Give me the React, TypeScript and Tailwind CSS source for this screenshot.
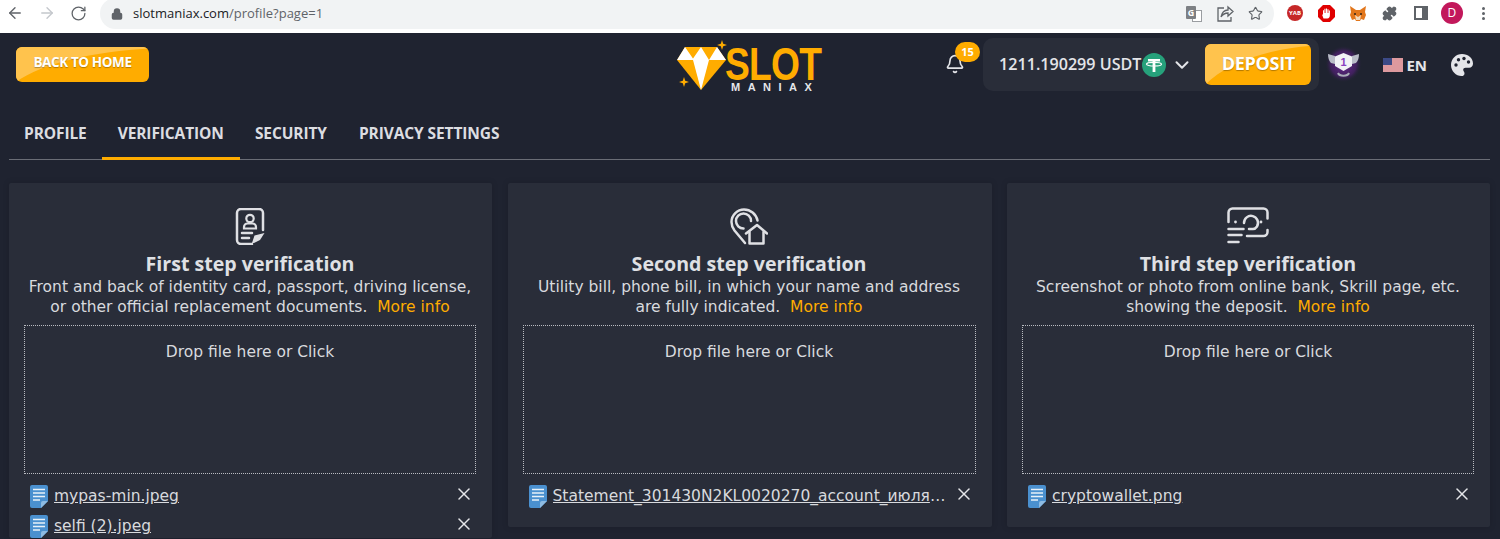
import { ArrowLeft, ArrowRight, RotateCw, Lock, Star, Puzzle, ChevronDown, Bell, X } from "lucide-react";

const font = { fontFamily: '"DejaVu Sans", sans-serif' };
const open = { fontFamily: '"Open Sans", sans-serif' };

function Gloss() {
  return (
    <svg className="absolute inset-0 h-full w-full" viewBox="0 0 100 100" preserveAspectRatio="none" aria-hidden="true">
      <path d="M0 0H100V4C60 12 20 45 0 100Z" fill="#ffc34d" />
    </svg>
  );
}

function IdIcon() {
  return (
    <svg width="30" height="37" viewBox="0 0 30 37" fill="none" stroke="#dfe0e4" strokeWidth="2.500" strokeLinecap="round" aria-hidden="true">
      <path d="M28 22V5a4 4 0 0 0-4-4H6a4 4 0 0 0-4 4v27a4 4 0 0 0 4 4h11" />
      <circle cx="15" cy="10.500" r="3.700" strokeWidth="2.200" />
      <path d="M9 20.500v-1.500a3.500 3.500 0 0 1 3.500-3.500h5a3.500 3.500 0 0 1 3.500 3.500v1.500Z" strokeWidth="2.200" />
      <path d="M7 25h10M7 30h7" />
      <path d="M17 35l2.500-7.500 10-2.500-4.500 7-6 3Z" fill="#dfe0e4" stroke="none" />
    </svg>
  );
}

function PinIcon() {
  return (
    <svg width="38" height="37" viewBox="0 0 38 37" fill="none" stroke="#dfe0e4" strokeWidth="2.500" strokeLinecap="round" strokeLinejoin="round" aria-hidden="true">
      <path d="M15 35 4.500 22.500A14 14 0 0 1 1.500 14C1.500 7 7.500 1.500 14 1.500c6.500 0 12 4.500 13.500 11" />
      <path d="M21 13a7.500 7.500 0 1 0-7.500 7.500" />
      <path d="M16 25.500 27 17l10 8.500" />
      <path d="M19.500 24v11.500h14V24" />
    </svg>
  );
}

function CashIcon() {
  return (
    <svg width="42" height="38" viewBox="0 0 42 38" fill="none" stroke="#dfe0e4" strokeWidth="2.500" strokeLinecap="round" aria-hidden="true">
      <path d="M1.500 15V5.500a4 4 0 0 1 4-4h31a4 4 0 0 1 4 4v6M40.500 23v2a4 4 0 0 1-4 4H20" />
      <path d="M17 16a7 7 0 1 1 13 3.500c-1 1.500-2 2.500-4 2.500h-4" />
      <circle cx="8.500" cy="15" r="1.400" fill="#dfe0e4" stroke="none" />
      <circle cx="34" cy="15" r="1.400" fill="#dfe0e4" stroke="none" />
      <path d="M1.500 22h15M1.500 28h13M1.500 35h10" />
    </svg>
  );
}

function FileIcon() {
  return (
    <svg width="18" height="23" viewBox="0 0 18 23" aria-hidden="true" className="shrink-0">
      <path d="M2 0h14a2 2 0 0 1 2 2v14l-7 7H2a2 2 0 0 1-2-2V2a2 2 0 0 1 2-2Z" fill="#4a90cf" />
      <path d="M18 16h-5a2 2 0 0 0-2 2v5Z" fill="#8ebbe2" />
      <path d="M3 4.500h12M3 8h12M3 11.500h12M3 15h7" stroke="#e8f1f9" strokeWidth="1.300" />
    </svg>
  );
}

function Tether() {
  return (
    <svg width="24" height="24" viewBox="0 0 24 24" aria-hidden="true" className="ml-[1px] shrink-0">
      <circle cx="12" cy="12" r="12" fill="#26a17b" />
      <path d="M6 6h12v2.600h-4.600V19h-2.800V8.600H6Z" fill="#fff" />
      <ellipse cx="12" cy="11.200" rx="7.500" ry="1.800" fill="none" stroke="#fff" strokeWidth="1.200" />
    </svg>
  );
}

function Trophy() {
  return (
    <svg width="37" height="38" viewBox="0 0 37 38" aria-hidden="true">
      <defs>
        <radialGradient id="glow">
          <stop offset="0%" stopColor="#7a2aa8" stopOpacity="0.9" />
          <stop offset="70%" stopColor="#5a1f80" stopOpacity="0.55" />
          <stop offset="100%" stopColor="#1f2330" stopOpacity="0" />
        </radialGradient>
      </defs>
      <circle cx="18.500" cy="19" r="18.500" fill="url(#glow)" />
      <path d="M3 9l7 2v8l-4-1C4 16 3 13 3 9ZM34 9l-7 2v8l4-1c2-2 3-5 3-9Z" fill="#b9bcc8" />
      <path d="M18.500 8l8.500 3.500V21l-8.500 5L10 21v-9.500Z" fill="#f1f2f6" />
      <text x="18.500" y="21" textAnchor="middle" fontSize="11" fontWeight="700" fill="#8a3fc0" fontFamily="Liberation Sans">1</text>
      <path d="M13 28c1.500 3.500 9.500 3.500 11 0" stroke="#a9acb8" strokeWidth="2" fill="none" />
    </svg>
  );
}

function Flag() {
  return (
    <svg width="20" height="14" viewBox="0 0 20 14" aria-hidden="true" className="shrink-0">
      <rect width="20" height="14" fill="#f2f2f2" />
      <path d="M0 1h20M0 3h20M0 5h20M0 7h20M0 9h20M0 11h20M0 13h20" stroke="#c8414b" strokeWidth="1" />
      <rect width="9" height="7" fill="#3c4a86" />
    </svg>
  );
}

function PaletteIcon() {
  return (
    <svg width="22" height="22" viewBox="0 0 22 22" aria-hidden="true" className="ml-[24px] mt-[21px] shrink-0">
      <path d="M11 0C5 0 0 4.800 0 11s5 11 10.500 11c2 0 3-1.200 3-2.600 0-1.800-1.300-2.200-1.300-3.600 0-1.200 1-2 2.300-2H18c2.500 0 4-1.800 4-4.300C22 4 17 0 11 0Z" fill="#e4e5e9" />
      <circle cx="5" cy="11" r="1.700" fill="#1f2330" />
      <circle cx="7.500" cy="5.800" r="1.700" fill="#1f2330" />
      <circle cx="13" cy="4.500" r="1.700" fill="#1f2330" />
      <circle cx="17.500" cy="8" r="1.700" fill="#1f2330" />
    </svg>
  );
}

function Logo() {
  return (
    <div className="ml-[9px] flex h-[58px] w-[146px] items-start" aria-label="Slot Maniax">
      <svg width="50" height="56" viewBox="0 0 50 56" className="shrink-0 overflow-visible" aria-hidden="true">
        <path d="M1 20 9 7h32l9 13-25 30Z" fill="#ffac00" />
        <path d="M1 20 9 7l9 13ZM16 20l9-13 8 13ZM33 20l8-13 9 13Z" fill="#fff" />
        <path d="M17 20h16l-8 30Z" fill="#fff" />
        <path d="M46 0l1.200 3.800 3.800 1.200-3.800 1.200L46 10l-1.200-3.800L41 5l3.800-1.200ZM8 37l1.200 3.800 3.800 1.200-3.800 1.200L8 47l-1.200-3.800L3 42l3.800-1.200Z" fill="#ffac00" />
      </svg>
      <div className="-ml-[1px] flex w-[97px] flex-col" style={{ fontFamily: '"Liberation Sans", sans-serif' }}>
        <span className="mt-[8px] h-[33px] origin-left scale-x-[0.81] whitespace-nowrap text-[46px] font-bold leading-[33px] tracking-[-1px] text-[#ffac00]">SLOT</span>
        <span className="mt-[1px] pl-[6px] text-[11px] font-bold leading-[10px] tracking-[7.500px] whitespace-nowrap text-[#e5e6ea]">MANIAX</span>
      </div>
    </div>
  );
}

function Chrome() {
  const box = "flex w-[18px] shrink-0 items-center justify-center";
  return (
    <div className="flex h-[33px] items-start overflow-hidden bg-white" style={open}>
      <div className="flex h-[26px] w-[100px] items-center gap-[14px] pl-[6px] text-[#5f6368]">
        <ArrowLeft size={18} strokeWidth={1.800} />
        <ArrowRight size={18} strokeWidth={1.800} className="text-[#c4c7cc]" />
        <RotateCw size={17} strokeWidth={1.800} />
      </div>
      <div className="-mt-[2px] flex h-[31px] w-[1174px] items-center rounded-full bg-[#f1f3f4] pl-[11px] pr-[10px]">
        <Lock size={12} strokeWidth={3} className="text-[#5f6368]" fill="#5f6368" />
        <span className="ml-[10px] text-[13px] text-[#202124]">slotmaniax.com<span className="text-[#5f6368]">/profile?page=1</span></span>
        <div className="ml-auto flex items-center gap-[14px] pr-[1px] text-[#5f6368]">
          <div className="relative h-[16px] w-[16px]">
            <div className="absolute bottom-0 right-0 h-[12px] w-[10px] border border-[#9a9da1] bg-white" />
            <div className="relative flex h-[13px] w-[10px] items-center justify-center rounded-[1px] bg-[#7d8084] text-[9px] font-bold leading-none text-white">G</div>
          </div>
          <svg width="18" height="18" viewBox="0 0 18 18" fill="none" stroke="#5f6368" strokeWidth="1.300" aria-hidden="true">
            <path d="M8 3H2v13h13v-4M5 12c1-5 4-7 7-7V2l5 4.500L12 11V8c-3 0-5 1-7 4Z" />
          </svg>
          <Star size={15} strokeWidth={1.800} />
        </div>
      </div>
      <div className="flex h-[26px] flex-1 items-center gap-[13.400px] pl-[12px] text-[#5f6368]">
        <div className={box}>
          <div className="flex h-[16px] w-[16px] items-center justify-center rounded-full bg-[#c62828] text-[6px] font-bold leading-none text-white">YAB</div>
        </div>
        <div className={box}>
          <svg width="17" height="17" viewBox="0 0 17 17" aria-hidden="true">
            <path d="M5 0h7l5 5v7l-5 5H5l-5-5V5Z" fill="#e00000" />
            <path d="M5.500 13.500 4 9.500l1 .3V5.200l1 0V8h.4V3.800h1.100V8H8V3.500h1V8h.4V4.200h1.100V8h.4V5.500h1V10c0 2-1 3.500-2.500 3.500Z" fill="#fff" />
          </svg>
        </div>
        <div className={box}>
          <svg width="18" height="17" viewBox="0 0 18 17" aria-hidden="true">
            <path d="M1 1l6 4h4l6-4-1 6 1 3-2 5-3-1-1 2H7l-1-2-3 1-2-5 1-3Z" fill="#e2761b" />
            <path d="M6 10l3 2 3-2-1 5H7Z" fill="#f3d9bd" />
            <path d="M5 9h2M11 9h2" stroke="#33261a" strokeWidth="1.300" />
          </svg>
        </div>
        <div className={box}><Puzzle size={15} strokeWidth={2} fill="#5f6368" /></div>
        <div className={box}>
          <div className="h-[14px] w-[14px] border-2 border-[#5f6368] pl-[6px]"><div className="h-full bg-[#5f6368]" /></div>
        </div>
        <div className={box}>
          <div className="flex h-[22px] w-[22px] shrink-0 items-center justify-center rounded-full bg-[#c2185b] text-[12px] text-white">D</div>
        </div>
        <div className={`${box} flex-col gap-[2px]`}>
          <span className="h-[3px] w-[3px] shrink-0 rounded-full bg-[#5f6368]" />
          <span className="h-[3px] w-[3px] shrink-0 rounded-full bg-[#5f6368]" />
          <span className="h-[3px] w-[3px] shrink-0 rounded-full bg-[#5f6368]" />
        </div>
      </div>
    </div>
  );
}

function Header() {
  return (
    <header className="grid h-[77px] grid-cols-[1fr_auto_1fr] items-start pl-[16px] pr-[27px]">
      <div className="pt-[14px]">
        <button className="relative h-[35px] w-[133px] overflow-hidden rounded-[6px] bg-[#ffac00] pb-[5px] text-white">
          <Gloss />
          <span className="relative text-[13.500px] font-bold tracking-[-0.400px] [text-shadow:0_1px_1px_rgba(0,0,0,.3)]" style={open}>BACK TO HOME</span>
        </button>
      </div>
      <div className="pt-[7px]"><Logo /></div>
      <div className="flex items-start justify-end">
        <div className="relative mr-[18px] mt-[21px] text-[#e4e5e9]">
          <Bell size={20} strokeWidth={2} />
          <span className="absolute -right-[15px] -top-[12px] flex h-[20px] w-[25px] items-center justify-center rounded-full bg-[#ffac00] text-[11px] font-bold text-white" style={open}>15</span>
        </div>
        <div className="mt-[5px] flex h-[53px] items-center rounded-[10px] bg-[#292d39] pl-[16px] pr-[8px]">
          <span className="whitespace-nowrap text-[16.100px] font-semibold text-[#e4e5e9]" style={open}>1211.190299 USDT</span>
          <Tether />
          <ChevronDown size={22} strokeWidth={2.200} className="ml-[5px] text-[#e4e5e9]" />
          <button className="relative ml-[12px] h-[41px] w-[106px] overflow-hidden rounded-[6px] bg-[#ffac00] pb-[3px] text-white">
            <Gloss />
            <span className="relative text-[18px] font-bold tracking-[-0.300px] [text-shadow:0_1px_1px_rgba(0,0,0,.3)]" style={open}>DEPOSIT</span>
          </button>
        </div>
        <div className="ml-[6px] mt-[12px]"><Trophy /></div>
        <div className="ml-[21px] mt-[21px] flex items-center gap-[3px]">
          <Flag />
          <span className="text-[15px] font-bold text-[#e4e5e9]" style={open}>EN</span>
        </div>
        <PaletteIcon />
      </div>
    </header>
  );
}

function Tabs() {
  const tabs = [
    { label: "PROFILE", cls: "px-[15px] border-transparent" },
    { label: "VERIFICATION", cls: "px-[16px] border-[#ffac00]" },
    { label: "SECURITY", cls: "pl-[15px] pr-[16px] border-transparent" },
    { label: "PRIVACY SETTINGS", cls: "px-[16px] border-transparent" },
  ];
  return (
    <nav className="ml-[9px] mr-[10px] flex h-[50px] border-b border-[#6a6d76]" style={open}>
      {tabs.map((t) => (
        <div key={t.label} className={`flex h-[50px] items-center border-b-[3px] text-[15.500px] font-bold tracking-[-0.100px] text-[#dcdde1] ${t.cls}`}>
          {t.label}
        </div>
      ))}
    </nav>
  );
}

function Card({ icon, title, lines, files, tall }: { icon: React.ReactNode; title: string; lines: [string, string]; files: string[]; tall?: boolean }) {
  return (
    <section className={`min-w-0 rounded-[2px] bg-[#292d39] pl-[15px] pr-[16px] pt-[24px] shadow-[0_0_6px_rgba(0,0,0,.15)] ${tall ? "" : "pb-[19px]"}`}>
      <div className="flex h-[38px] items-center justify-center">{icon}</div>
      <h2 className="mt-[6px] text-center text-[19.600px] font-bold leading-[26px] text-[#dfe0e4]" style={open}>{title}</h2>
      <p className="whitespace-nowrap text-center text-[15.500px] leading-[20px] text-[#d8dade]">
        {lines[0]}
        <br />
        {lines[1]}&nbsp; <span className="text-[#ffac00]">More info</span>
      </p>
      <div className="mt-[8px] h-[149px] border border-dotted border-[#b9bbc1] pt-[16px] text-center text-[15.500px] leading-[21px] text-[#d8dade]">
        Drop file here or Click
      </div>
      <div className="mt-[11px] flex flex-col gap-[7px]">
        {files.map((f) => (
          <div key={f} className="flex h-[23px] items-center pl-[6px] pr-[2px]">
            <FileIcon />
            <span className="ml-[6px] min-w-0 flex-1 truncate pr-[5px] pt-[1px] text-[15.500px] text-[#d8dade] underline">{f}</span>
            <X size={20} strokeWidth={1.800} className="shrink-0 -translate-y-[3px] text-[#e4e5e9]" />
          </div>
        ))}
      </div>
    </section>
  );
}

export default function App() {
  return (
    <div className="h-[539px] overflow-hidden bg-[#1f2330]" style={font}>
      <Chrome />
      <Header />
      <Tabs />
      <main className="ml-[9px] mt-[23px] grid grid-cols-[483px_484px_483px] items-start gap-x-[15.500px]">
        <Card
          tall
          icon={<IdIcon />}
          title="First step verification"
          lines={["Front and back of identity card, passport, driving license,", "or other official replacement documents."]}
          files={["mypas-min.jpeg", "selfi (2).jpeg"]}
        />
        <Card
          icon={<PinIcon />}
          title="Second step verification"
          lines={["Utility bill, phone bill, in which your name and address", "are fully indicated."]}
          files={["Statement_301430N2KL0020270_account_июля_2023.pdf"]}
        />
        <Card
          icon={<CashIcon />}
          title="Third step verification"
          lines={["Screenshot or photo from online bank, Skrill page, etc.", "showing the deposit."]}
          files={["cryptowallet.png"]}
        />
      </main>
    </div>
  );
}
